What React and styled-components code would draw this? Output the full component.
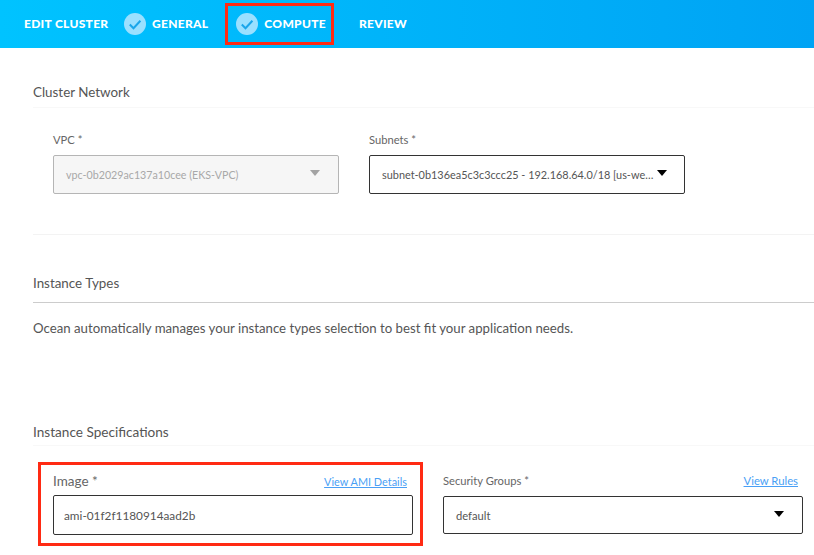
import React from 'react'
import styled, { createGlobalStyle } from 'styled-components'

const GlobalStyle = createGlobalStyle`
  html, body { margin: 0; padding: 0; background: #fff; }
  body { font-family: 'Lato', 'Open Sans', sans-serif; color: #555; overflow: hidden; }
`

const Page = styled.div`
  width: 814px;
  height: 555px;
  overflow: hidden;
`

const Header = styled.div`
  display: flex;
  align-items: center;
  box-sizing: border-box;
  height: 48px;
  padding: 0 0 1px 24px;
  background: linear-gradient(90deg, #00c3ff 0%, #00a3f4 100%);
  color: #fff;
  font-size: 12px;
  font-weight: 900;
  letter-spacing: 0.3px;
`

const Title = styled.div`
  width: 100px;
`

const Step = styled.div`
  display: flex;
  align-items: center;
  gap: 6px;
  box-sizing: border-box;
  height: 42px;
  margin-left: ${p => p.$ml}px;
  padding: 0 ${p => (p.$active ? 5 : 0)}px 0 ${p => (p.$active ? 8 : 0)}px;
  border: ${p => (p.$active ? '3px solid #ff2a13' : 'none')};
`

const Check = styled.svg`
  width: 22px;
  height: 22px;
  flex: none;
`

const Content = styled.div`
  padding-left: 33px;
`

const SectionTitle = styled.div`
  height: 17px;
  line-height: 17px;
  margin-top: ${p => p.$mt}px;
  font-size: ${p => p.$size || 13.4}px;
  color: #555;
  padding-bottom: ${p => p.$pb || 6}px;
  border-bottom: 1px solid ${p => p.$line};
`

const Row = styled.div`
  display: flex;
  margin-top: ${p => p.$mt}px;
  padding-left: ${p => p.$pl}px;
  gap: ${p => p.$gap}px;
`

const Field = styled.div`
  width: ${p => p.$w}px;
`

const LabelRow = styled.div`
  display: flex;
  justify-content: space-between;
  align-items: center;
  height: 16px;
  margin-bottom: ${p => p.$mb}px;
`

const Label = styled.span`
  font-size: ${p => p.$size || 11.2}px;
  color: #666;
`

const Link = styled.a`
  margin-right: ${p => p.$mr}px;
  font-size: ${p => p.$size}px;
  color: #4a9ff5;
  text-decoration: underline;
`

const Select = styled.div`
  display: flex;
  align-items: center;
  justify-content: space-between;
  box-sizing: border-box;
  height: ${p => p.$h || 39}px;
  padding: 0 ${p => p.$pr || 18}px 0 ${p => p.$pl || 12}px;
  border: 1px solid ${p => (p.$disabled ? '#b5b5b5' : '#333')};
  border-radius: 2px;
  background: ${p => (p.$disabled ? '#f6f6f6' : '#fff')};
  color: ${p => (p.$disabled ? '#a8a8a8' : '#555')};
  font-size: ${p => p.$size}px;
  white-space: nowrap;
`

const Arrow = styled.span`
  width: 0;
  height: 0;
  margin-bottom: 3px;
  border-left: 5.5px solid transparent;
  border-right: 5.5px solid transparent;
  border-top: 6px solid ${p => (p.$disabled ? '#a3a3a3' : '#000')};
`

const Divider = styled.div`
  height: 1px;
  margin-top: 40px;
  background: #f3f3f3;
`

const Text = styled.div`
  margin-top: 17px;
  font-size: 13.23px;
  line-height: 17px;
  color: #555;
`

const Bottom = styled.div`
  display: flex;
  align-items: flex-start;
  margin-top: 16px;
  margin-left: 5px;
`

const Highlight = styled.div`
  box-sizing: border-box;
  width: 385px;
  height: 84px;
  padding: 8px 7px 0 12px;
  border: 3px solid #ff2a13;
`

const Side = styled.div`
  width: 360px;
  margin-left: 20px;
  padding-top: 10px;
`

const CheckIcon = () => (
  <Check viewBox="0 0 22 22">
    <circle cx="11" cy="11" r="11" fill="#9be0ff" />
    <path d="M5.8 11.5l3.7 3.7L16.4 7.8" fill="none" stroke="#1aa6ea" strokeWidth="2" />
  </Check>
)

const App = () => (
  <Page>
    <GlobalStyle />
    <Header>
      <Title>EDIT CLUSTER</Title>
      <Step $ml={0}><CheckIcon />GENERAL</Step>
      <Step $ml={17} $active><CheckIcon />COMPUTE</Step>
      <Step $ml={25}>REVIEW</Step>
    </Header>
    <Content>
      <SectionTitle $mt={36} $line="#f8f8f8">Cluster Network</SectionTitle>
      <Row $mt={23} $pl={20} $gap={30}>
        <Field $w={286}>
          <LabelRow $mb={8}><Label>VPC *</Label></LabelRow>
          <Select $disabled $size={10.7}>
            vpc-0b2029ac137a10cee (EKS-VPC)
            <Arrow $disabled />
          </Select>
        </Field>
        <Field $w={316}>
          <LabelRow $mb={8}><Label>Subnets *</Label></LabelRow>
          <Select $pr={17} $size={10.9}>
            subnet-0b136ea5c3c3ccc25 - 192.168.64.0/18 [us-we…
            <Arrow />
          </Select>
        </Field>
      </Row>
      <Divider />
      <SectionTitle $mt={40} $pb={10} $line="#ccc">Instance Types</SectionTitle>
      <Text>Ocean automatically manages your instance types selection to best fit your application needs.</Text>
      <SectionTitle $mt={87} $pb={4} $size={13.6} $line="#f8f8f8">Instance Specifications</SectionTitle>
      <Bottom>
        <Highlight>
          <LabelRow $mb={6}>
            <Label $size={13.5}>Image *</Label>
            <Link $size={10.9} $mr={6}>View AMI Details</Link>
          </LabelRow>
          <Select $h={40} $pl={10} $size={11.8}>ami-01f2f1180914aad2b</Select>
        </Highlight>
        <Side>
          <LabelRow $mb={8}>
            <Label>Security Groups *</Label>
            <Link $size={11.3} $mr={5}>View Rules</Link>
          </LabelRow>
          <Select $h={38} $size={11.2}>
            default
            <Arrow />
          </Select>
        </Side>
      </Bottom>
    </Content>
  </Page>
)

export default App
